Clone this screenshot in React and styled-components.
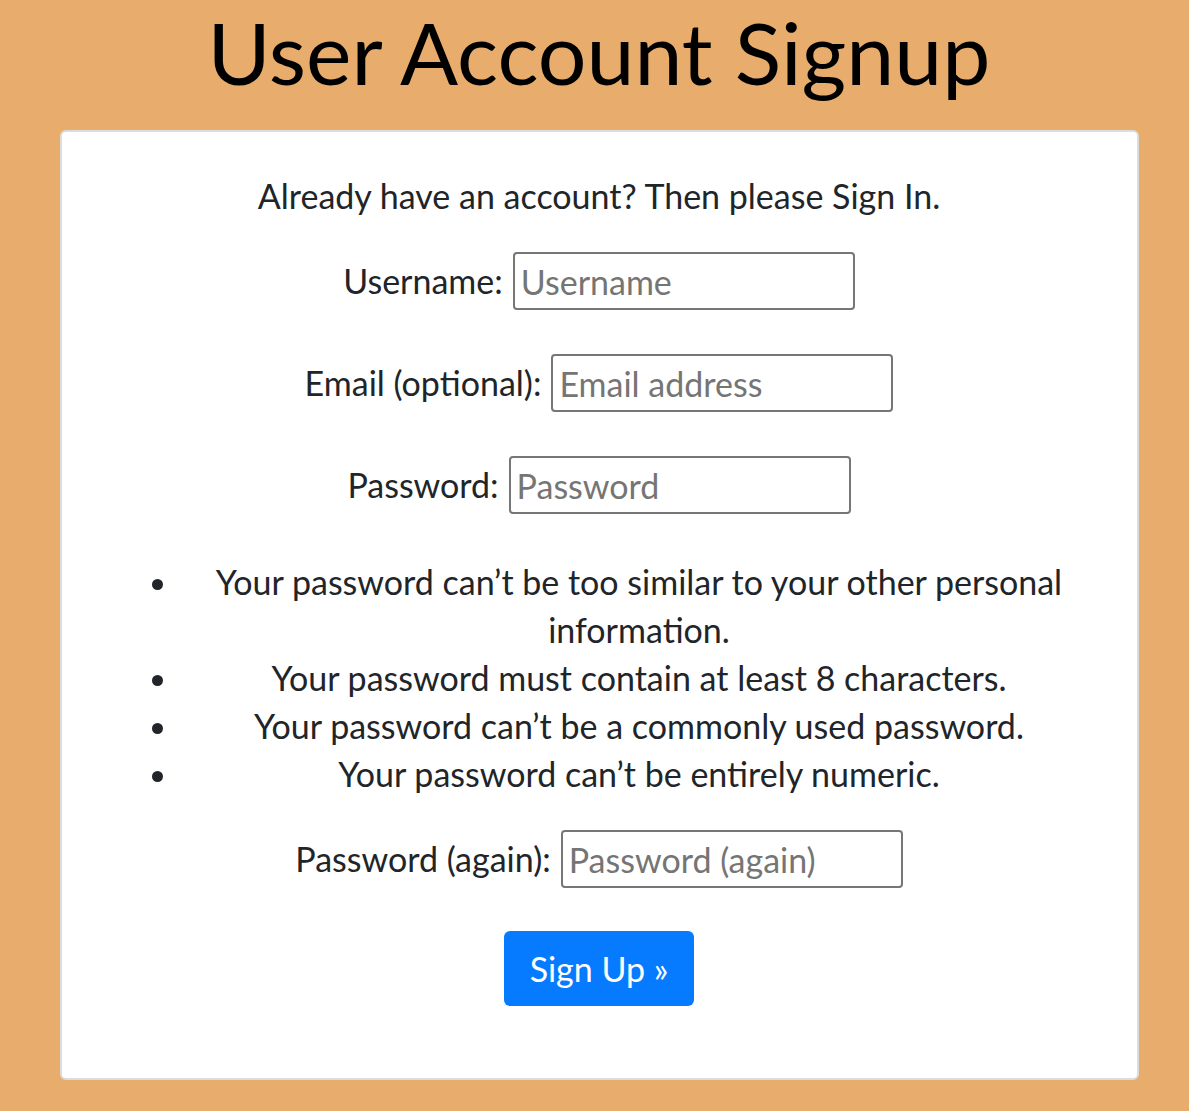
import React from "react";
import styled, { createGlobalStyle } from "styled-components";

const GlobalStyle = createGlobalStyle`
  html, body {
    margin: 0;
    padding: 0;
    background: #e8ad6c;
  }
  body {
    font-family: Lato, "Open Sans", sans-serif;
    color: #212529;
  }
`;

const Page = styled.div`
  display: flex;
  flex-direction: column;
  align-items: center;
  padding: 0 51px 31px 60px;
`;

const Title = styled.h1`
  margin: 0;
  height: 130px;
  line-height: 1.2;
  font-size: 86px;
  font-weight: 400;
  color: #000;
  text-align: center;
`;

const Card = styled.div`
  box-sizing: border-box;
  width: 1079px;
  background: #fff;
  border: 2px solid #dcdcdc;
  border-radius: 6px;
  padding: 40px 35px 72px;
  display: flex;
  flex-direction: column;
  align-items: center;
  font-size: 34px;
  line-height: 48px;
`;

const Intro = styled.p`
  margin: 0 0 32px;
  text-align: center;
`;

const Row = styled.div`
  display: flex;
  align-items: center;
  justify-content: center;
  gap: 10px;
  margin-bottom: ${(p) => p.$after}px;
`;

const Label = styled.label`
  white-space: nowrap;
`;

const Input = styled.input`
  box-sizing: border-box;
  width: 342px;
  height: 58px;
  border: 2px solid #767676;
  border-radius: 4px;
  padding: 0 6px;
  font-family: inherit;
  font-size: 34px;
  color: #212529;
  &::placeholder {
    color: #757575;
  }
`;

const Rules = styled.ul`
  box-sizing: border-box;
  align-self: stretch;
  margin: 0 0 32px;
  padding-left: 84px;
  padding-right: 4px;
  list-style: disc;
`;

const Rule = styled.li`
  text-align: center;
`;

const Button = styled.button`
  box-sizing: border-box;
  height: 75px;
  padding: 0 26px;
  border: none;
  border-radius: 6px;
  background: #077bff;
  color: #fff;
  font-family: inherit;
  font-size: 34px;
  margin-top: 11px;
  cursor: pointer;
`;

const fields = [
  { label: "Username:", placeholder: "Username", type: "text", after: 44 },
  { label: "Email (optional):", placeholder: "Email address", type: "email", after: 44 },
  { label: "Password:", placeholder: "Password", type: "password", after: 44 },
];

const rules = [
  "Your password can’t be too similar to your other personal information.",
  "Your password must contain at least 8 characters.",
  "Your password can’t be a commonly used password.",
  "Your password can’t be entirely numeric.",
];

export default function App() {
  return (
    <>
      <GlobalStyle />
      <Page>
        <Title>User Account Signup</Title>
        <Card>
          <Intro>Already have an account? Then please Sign In.</Intro>
          {fields.map((f) => (
            <Row key={f.label} $after={f.after}>
              <Label>{f.label}</Label>
              <Input type={f.type} placeholder={f.placeholder} />
            </Row>
          ))}
          <Rules>
            {rules.map((r) => (
              <Rule key={r}>{r}</Rule>
            ))}
          </Rules>
          <Row $after={32}>
            <Label>Password (again):</Label>
            <Input type="password" placeholder="Password (again)" />
          </Row>
          <Button>Sign Up »</Button>
        </Card>
      </Page>
    </>
  );
}
